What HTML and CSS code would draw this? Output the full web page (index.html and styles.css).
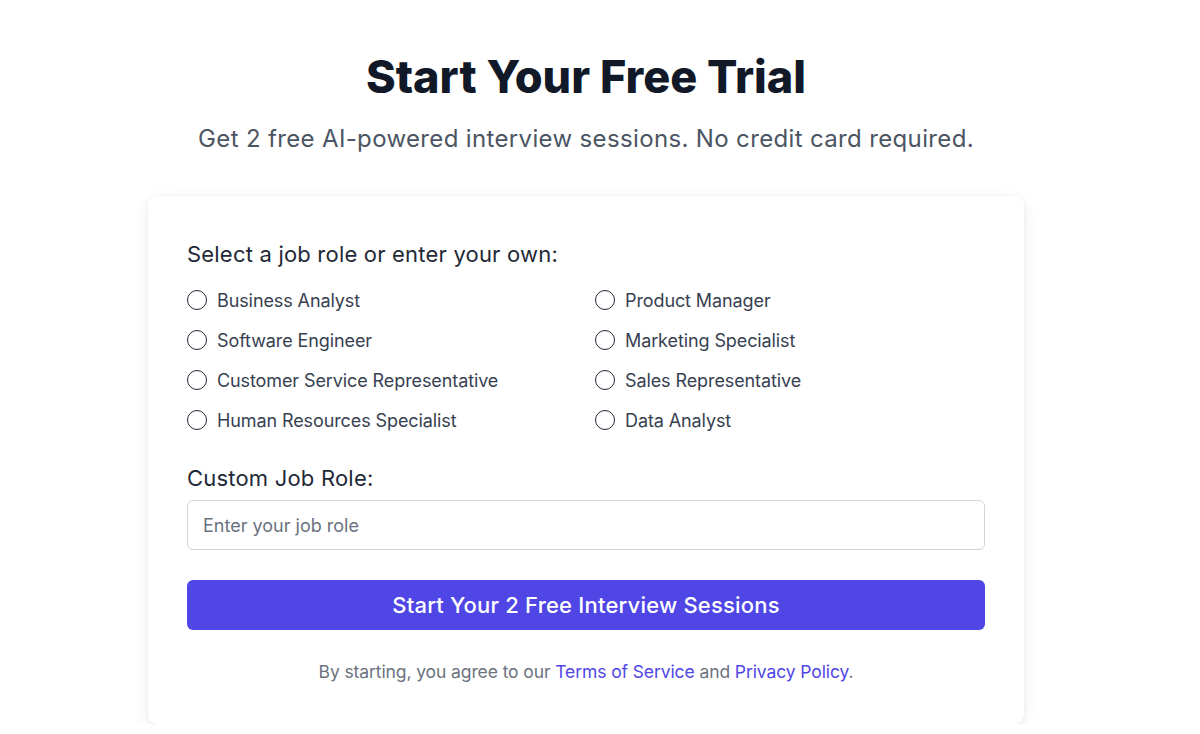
FILE: index.html
```html
<!DOCTYPE html>
<html lang="en">
<head>
<meta charset="utf-8">
<title>Start Your Free Trial</title>
<link rel="stylesheet" href="styles.css">
</head>
<body>
<main class="page">
  <header class="hero">
    <h1 class="title">Start Your Free Trial</h1>
    <p class="subtitle">Get 2 free AI-powered interview sessions. No credit card required.</p>
  </header>
  <section class="card">
    <p class="label">Select a job role or enter your own:</p>
    <div class="roles">
      <label class="role"><span class="radio"></span>Business Analyst</label>
      <label class="role"><span class="radio"></span>Product Manager</label>
      <label class="role"><span class="radio"></span>Software Engineer</label>
      <label class="role"><span class="radio"></span>Marketing Specialist</label>
      <label class="role"><span class="radio"></span>Customer Service Representative</label>
      <label class="role"><span class="radio"></span>Sales Representative</label>
      <label class="role"><span class="radio"></span>Human Resources Specialist</label>
      <label class="role"><span class="radio"></span>Data Analyst</label>
    </div>
    <p class="label custom-label">Custom Job Role:</p>
    <div class="input">Enter your job role</div>
    <button class="cta">Start Your 2 Free Interview Sessions</button>
    <p class="terms">By starting, you agree to our <a class="link">Terms of Service</a> and <a class="link">Privacy Policy</a>.</p>
  </section>
</main>
</body>
</html>
```

FILE: styles.css
```css
* { box-sizing: border-box; }
html, body { margin: 0; padding: 0; background: #ffffff; }
body { font-family: Inter, "Noto Sans", sans-serif; color: #111827; }
.page {
  width: 1172px;
  display: flex;
  flex-direction: column;
  align-items: center;
  padding-top: 49px;
}
.hero { text-align: center; }
.title {
  margin: 0;
  font-size: 45px;
  line-height: 56px;
  font-weight: 800;
  color: #111827;
  letter-spacing: 0;
}
.subtitle {
  margin: 17px 0 0;
  font-size: 24px;
  line-height: 34px;
  color: #4b5563;
  letter-spacing: 0.35px;
}
.card {
  margin-top: 40px;
  width: 876px;
  padding: 42px 39px 39px 39px;
  background: #fff;
  border-radius: 9px;
  box-shadow: 0 4px 16px rgba(0,0,0,0.07), 0 1px 4px rgba(0,0,0,0.05);
}
.label {
  margin: 0;
  font-size: 22px;
  line-height: 32px;
  color: #1f2937;
  letter-spacing: 0.2px;
}
.roles {
  margin-top: 16px;
  display: grid;
  grid-template-columns: 392px 1fr;
  column-gap: 16px;
  row-gap: 12px;
}
.role {
  display: flex;
  align-items: center;
  gap: 10px;
  height: 28px;
  font-size: 18px;
  color: #374151;
  letter-spacing: -0.1px;
}
.radio {
  width: 20px;
  height: 20px;
  border: 1.5px solid #1f2937;
  border-radius: 50%;
  flex: none;
}
.custom-label { margin-top: 28px; }
.input {
  margin-top: 6px;
  height: 50px;
  border: 1px solid #d1d5db;
  border-radius: 6px;
  padding: 0 15px;
  display: flex;
  align-items: center;
  font-size: 18px;
  color: #6b7280;
}
.cta {
  margin-top: 30px;
  width: 100%;
  height: 50px;
  border: none;
  border-radius: 6px;
  background: #4f46e5;
  color: #fff;
  font-family: inherit;
  font-size: 22px;
  font-weight: 500;
  letter-spacing: 0.2px;
}
.terms {
  margin: 29px 0 0;
  text-align: center;
  font-size: 17.5px;
  line-height: 26px;
  color: #6b7280;
  letter-spacing: -0.1px;
}
.link { color: #4f46e5; text-decoration: none; }
```
